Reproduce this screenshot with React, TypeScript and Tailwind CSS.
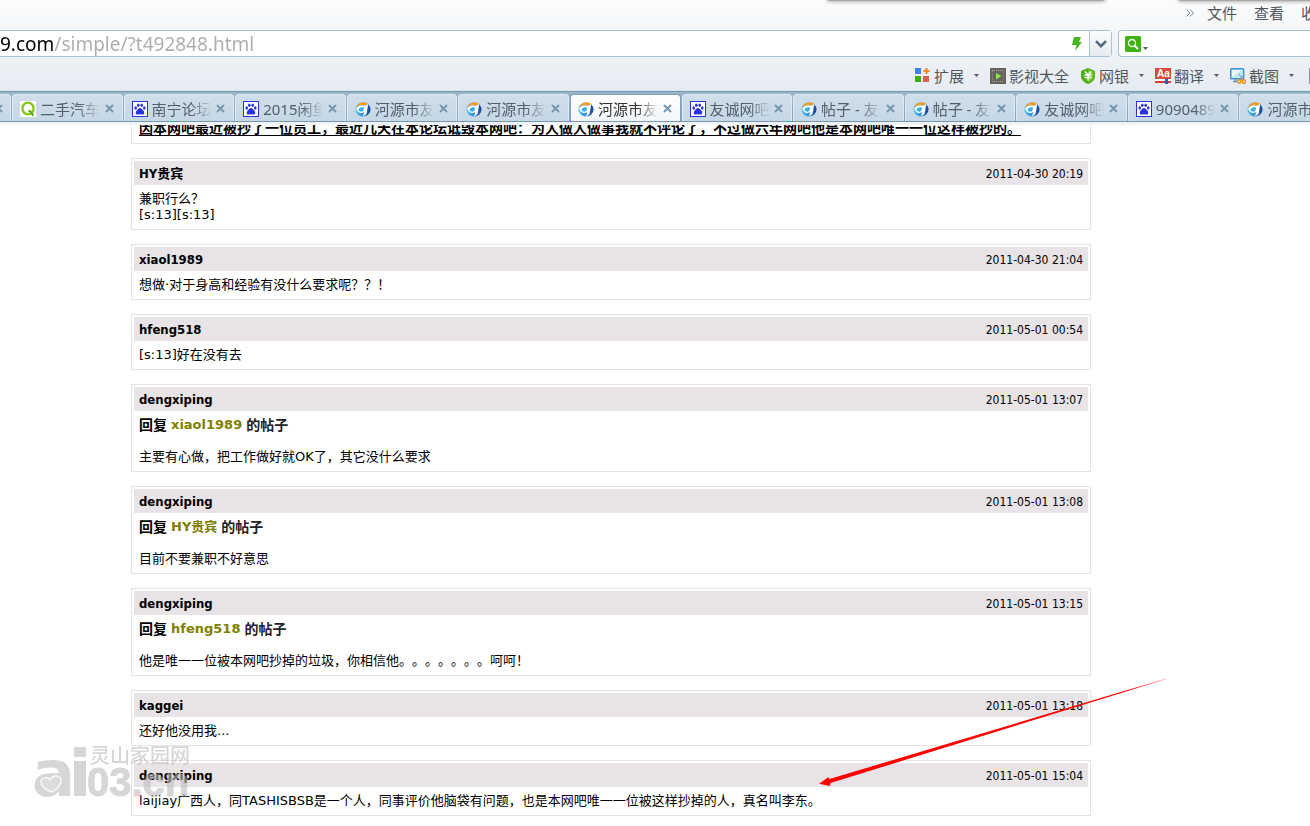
import { useId, type ReactNode } from 'react';

type SiteIcon = 'q' | 'paw' | 'swirl';

interface Tab {
  icon: SiteIcon;
  title: string;
  active?: boolean;
}

const TABS: Tab[] = [
  { icon: 'q', title: '二手汽车' },
  { icon: 'paw', title: '南宁论坛' },
  { icon: 'paw', title: '2015闲鱼' },
  { icon: 'swirl', title: '河源市友' },
  { icon: 'swirl', title: '河源市友' },
  { icon: 'swirl', title: '河源市友', active: true },
  { icon: 'paw', title: '友诚网吧' },
  { icon: 'swirl', title: '帖子 - 友' },
  { icon: 'swirl', title: '帖子 - 友' },
  { icon: 'swirl', title: '友诚网吧' },
  { icon: 'paw', title: '9090489' },
  { icon: 'swirl', title: '河源市友' },
];

interface Post {
  author: string;
  time: string;
  replyTo?: string;
  lines: string[];
}

const POSTS: Post[] = [
  { author: 'HY贵宾', time: '2011-04-30 20:19', lines: ['兼职行么？', '[s:13][s:13]'] },
  { author: 'xiaol1989', time: '2011-04-30 21:04', lines: ['想做·对于身高和经验有没什么要求呢？？！'] },
  { author: 'hfeng518', time: '2011-05-01 00:54', lines: ['[s:13]好在没有去'] },
  {
    author: 'dengxiping',
    time: '2011-05-01 13:07',
    replyTo: 'xiaol1989',
    lines: ['主要有心做，把工作做好就OK了，其它没什么要求'],
  },
  { author: 'dengxiping', time: '2011-05-01 13:08', replyTo: 'HY贵宾', lines: ['目前不要兼职不好意思'] },
  {
    author: 'dengxiping',
    time: '2011-05-01 13:15',
    replyTo: 'hfeng518',
    lines: ['他是唯一一位被本网吧抄掉的垃圾，你相信他。。。。。。。呵呵！'],
  },
  { author: 'kaggei', time: '2011-05-01 13:18', lines: ['还好他没用我...'] },
  {
    author: 'dengxiping',
    time: '2011-05-01 15:04',
    lines: ['laijiay广西人，同TASHISBSB是一个人，同事评价他脑袋有问题，也是本网吧唯一一位被这样抄掉的人，真名叫李东。'],
  },
];

function TabIcon({ icon }: { icon: SiteIcon }) {
  const id = useId();
  if (icon === 'q') {
    return (
      <svg viewBox="0 0 16 16" className="size-4 shrink-0">
        <rect width="16" height="16" fill="#fff" />
        <ellipse cx="8" cy="7.5" rx="5.6" ry="5.9" fill="none" stroke="#86c41c" strokeWidth="2.4" />
        <path d="M8.5 9.5q3.5 1.2 4.5 5.5" fill="none" stroke="#5da80c" strokeWidth="2" />
      </svg>
    );
  }
  if (icon === 'paw') {
    return (
      <svg viewBox="0 0 16 16" className="size-4 shrink-0">
        <rect x="0.5" y="0.5" width="15" height="15" fill="#fff" stroke="#2932e1" />
        <g fill="#2932e1">
          <ellipse cx="3.7" cy="7" rx="1.3" ry="1.7" />
          <ellipse cx="6.3" cy="4.2" rx="1.3" ry="1.8" />
          <ellipse cx="9.7" cy="4.2" rx="1.3" ry="1.8" />
          <ellipse cx="12.3" cy="7" rx="1.3" ry="1.7" />
          <path d="M8 7c1.600 0 2.200 1.600 3.400 2.700 1.300 1.200 1.200 3.800-.9 3.900-1 0-1.500-.4-2.500-.4s-1.500.4-2.500.4c-2.100-.1-2.200-2.700-.9-3.900C5.800 8.600 6.400 7 8 7z" />
        </g>
      </svg>
    );
  }
  return (
    <svg viewBox="0 0 16 16" className="size-4 shrink-0">
      <defs>
        <linearGradient id={id} x1="0" y1="0" x2="1" y2="0">
          <stop offset="0" stopColor="#4cc3f2" />
          <stop offset="0.5" stopColor="#2f8fd6" />
          <stop offset="1" stopColor="#173f96" />
        </linearGradient>
      </defs>
      <ellipse cx="8" cy="8.5" rx="7.5" ry="7" fill={`url(#${id})`} />
      <path d="M.5 7C2.500 1.500 8 0 13.500 2.800L10 4.800C7 3.300 3 4.300.5 7z" fill="#f99a1c" />
      <path d="M1 7.500C4 3.800 7 3.600 10 4.800L13.200 3 11.500 13 8 15.500l1.200-4.500C6.500 13 3 12 1.800 9z" fill="#fff" />
      <path d="M3.500 8.700C4.500 6.500 7 5.800 9 6.700L8.500 9.500C7 11.200 4.300 11.200 3.500 8.700z" fill="#38aee6" />
    </svg>
  );
}

function CloseIcon() {
  return (
    <svg viewBox="0 0 9 9" className="size-[9px] shrink-0">
      <path d="M1 1l7 7M8 1l-7 7" stroke="#7596ae" strokeWidth="1.9" />
    </svg>
  );
}

function BrowserTab({ icon, title, active }: Tab) {
  return (
    <div
      className={`flex h-[27px] min-w-0 items-center rounded-t-sm border border-b-0 pl-[7px] pr-2 pt-px ${
        active
          ? 'border-[#7fa2bb] bg-linear-to-b from-white to-[#f2f6fa]'
          : 'border-[#dfeaf2] bg-linear-to-b from-[#cfdeea] to-[#c6d7e5]'
      }`}
    >
      <TabIcon icon={icon} />
      <span
        className={`ml-1 w-[60px] overflow-hidden whitespace-nowrap text-[15px] leading-5 [mask-image:linear-gradient(to_right,black_65%,transparent)] ${
          active ? 'text-[#333333]' : 'text-[#4f5f6c]'
        }`}
      >
        {title}
      </span>
      <button type="button" aria-label="关闭" className="ml-auto">
        <CloseIcon />
      </button>
    </div>
  );
}

function Caret() {
  return (
    <svg viewBox="0 0 5 3" className="h-[3px] w-[5px] shrink-0">
      <path d="M0 0h5L2.500 3z" fill="#555b61" />
    </svg>
  );
}

function ToolButton({ label, menu, children }: { label: string; menu?: boolean; children: ReactNode }) {
  return (
    <button type="button" className="flex shrink-0 items-center">
      <svg viewBox="0 0 16 16" className="size-4 shrink-0">
        {children}
      </svg>
      <span className="ml-[3px] mr-2.5 whitespace-nowrap text-[15px] leading-5 last:mr-0">{label}</span>
      {menu && <Caret />}
    </button>
  );
}

function BrowserChrome() {
  return (
    <header className="bg-linear-to-b from-[#fbfcfd] to-[#dfe6ee] font-['Noto_Sans','Noto_Sans_CJK_SC',sans-serif] text-[#50565c]">
      <div className="relative h-[30px] overflow-hidden">
        {/* edges of the windows lying behind */}
        <div className="absolute -top-1 right-[205px] h-[5px] w-[278px] rounded bg-[#a9a9a9] shadow-[0_0_4px_#8a8a8a]" />
        <div className="absolute -right-1 -top-1 h-[5px] w-[136px] rounded bg-[#a9a9a9] shadow-[0_0_4px_#8a8a8a]" />
        <nav className="flex h-full items-center justify-end gap-[17px] pb-1 text-[15px] leading-5">
          <button type="button" aria-label="更多" className="-mr-1">
            <svg viewBox="0 0 8 8" className="size-2" fill="none" stroke="#7b8187">
              <path d="M0.500 0.500L4 4 .5 7.500M4 .5L7.500 4 4 7.500" />
            </svg>
          </button>
          <button type="button">文件</button>
          <button type="button">查看</button>
          <button type="button" className="w-[9px] overflow-hidden text-left">收</button>
        </nav>
      </div>

      <div className="flex gap-1.5">
        <div className="flex h-[27px] min-w-0 flex-1 items-center rounded-r-sm border border-l-0 border-[#a9c1d3] bg-white">
          <input
            aria-label="地址"
            type="text"
            defaultValue="9.com/simple/?t492848.html"
            className="min-w-0 flex-1 bg-linear-to-r from-black from-[54px] to-[#adadad] to-[54px] bg-clip-text text-[19px] leading-6 text-transparent outline-none"
          />
          <svg viewBox="0 0 10 14" className="mr-[7px] h-3.5 w-2.5">
            <path d="M2 0h7L7 5h3L3 14l1.500-6H0z" fill="#45b81e" />
          </svg>
          <button
            type="button"
            aria-label="展开"
            className="flex h-full w-[22px] items-center justify-center border-l border-[#a9c1d3] bg-linear-to-b from-[#fafbfc] to-[#e6ebf1]"
          >
            <svg viewBox="0 0 12 8" className="h-2 w-3" fill="none">
              <path d="M1 1.200l5 5 5-5" stroke="#56697c" strokeWidth="2.6" />
            </svg>
          </button>
        </div>
        <div className="flex h-[27px] w-[192px] items-center rounded-l-sm border border-r-0 border-[#a9c1d3] bg-white pl-1.5">
          <svg viewBox="0 0 16 16" className="size-4">
            <rect width="16" height="16" rx="1.5" fill="#3db312" />
            <circle cx="7" cy="7" r="3.5" fill="none" stroke="#fff" strokeWidth="1.3" />
            <path d="M9.500 9.500l3.500 3.500" stroke="#fff" strokeWidth="2" />
          </svg>
          <div className="ml-0.5 mt-2.5">
            <Caret />
          </div>
          <input aria-label="搜索" type="text" className="min-w-0 flex-1 pl-1 text-[15px] outline-none" />
        </div>
      </div>

      <div className="flex h-[34px] items-center justify-end gap-[11px] overflow-hidden border-b border-[#dbe7ee] pt-1">
        <ToolButton label="扩展" menu>
          <rect width="6" height="6" fill="#4380f5" />
          <path d="M11.500 0v6M8.500 3h6" stroke="#f5861f" strokeWidth="2" />
          <rect y="8" width="6" height="6" fill="#3fac0b" />
          <rect x="8" y="8" width="6" height="6" fill="#d9604f" />
        </ToolButton>
        <ToolButton label="影视大全">
          <rect width="16" height="16" fill="#66635d" />
          <path d="M2 2.500h12M2 13.500h12" stroke="#aaa69d" strokeDasharray="1 1" />
          <path d="M2.500 3v10M13.500 3v10" stroke="#8d8981" strokeDasharray="1 1" />
          <path d="M6 5l5.500 3L6 11.500z" fill="#8fe04a" />
        </ToolButton>
        <ToolButton label="网银" menu>
          <path d="M8 0l7 3v5c0 4-3 6.500-7 8-4-1.500-7-4-7-8V3z" fill="#4fae16" />
          <path d="M8 1.500l5.500 2.300V8c0 3-2.200 5-5.500 6.400z" fill="#78c832" />
          <path d="M5 3.500l3 3.500 3-3.500M4.500 7h7M4.500 9.500h7M8 7v5.500" stroke="#fff" strokeWidth="1.4" fill="none" />
        </ToolButton>
        <ToolButton label="翻译" menu>
          <rect width="16" height="11" fill="#db4b41" />
          <rect y="11" width="16" height="2" fill="#fff" />
          <rect y="13" width="16" height="2" fill="#d23a32" />
          <rect x="10" y="11" width="3" height="5" fill="#1766c2" />
          <text x="2" y="9" fontSize="10" fontWeight="700" fontFamily="Liberation Sans" fill="#fff">Aa</text>
        </ToolButton>
        <ToolButton label="截图" menu>
          <rect x="0.7" y="0.7" width="13" height="10" rx="1" fill="#bfe6fb" stroke="#3d93d3" strokeWidth="1.4" />
          <path d="M2 2h10L2 9z" fill="#e9f8ff" />
          <path d="M3 13.500h5M5.500 11v2" stroke="#4d97cc" strokeWidth="1.3" />
          <path d="M9 6l4 6M14 6l-4 6" stroke="#7791a5" />
          <circle cx="9.3" cy="13.5" r="1.7" fill="none" stroke="#f08a12" strokeWidth="1.4" />
          <circle cx="13.8" cy="13.5" r="1.7" fill="none" stroke="#f08a12" strokeWidth="1.4" />
        </ToolButton>
        <div className="ml-1 h-4 w-px bg-[#8c9298]" />
      </div>

      <div className="overflow-hidden border-y border-[#7898b0] bg-linear-to-b from-[#9bb7cb] to-[#83a4bc]">
        <div className="flex gap-px pt-0.5">
          <div className="flex w-[11px] shrink-0 items-center justify-end overflow-hidden rounded-tr-sm border-r border-t border-[#dfeaf2] bg-linear-to-b from-[#cfdeea] to-[#c6d7e5] pr-[7px]">
            <CloseIcon />
          </div>
          <div className="grid w-[1338px] shrink-0 grid-cols-12 gap-px">
            {TABS.map((tab, i) => (
              <BrowserTab key={i} {...tab} />
            ))}
          </div>
        </div>
      </div>
    </header>
  );
}

function PostCard({ author, time, replyTo, lines }: Post) {
  return (
    <article className="border border-[#e4e4e4] p-0.5">
      <header className="flex h-6 items-center justify-between bg-[#e7e3e7] px-[5px] pt-0.5">
        <b className="font-['DejaVu_Sans_Condensed','Noto_Sans_CJK_SC',sans-serif]">{author}</b>
        <time className="font-['DejaVu_Sans_Condensed',sans-serif] text-[12px]">{time}</time>
      </header>
      <div className="px-[5px] pb-1 pt-1.5">
        {replyTo && (
          <h3 className="mb-4 flex gap-1 font-bold">
            <span className="text-[14px]">回复</span>
            <a href="#" className="text-[#808000]">{replyTo}</a>
            <span className="text-[14px] text-[#222222]">的帖子</span>
          </h3>
        )}
        {lines.map((line, i) => (
          <p key={i}>{line}</p>
        ))}
      </div>
    </article>
  );
}

// Site logo stamped over the lower left corner
function Watermark() {
  return (
    <svg
      viewBox="0 0 160 54"
      className="pointer-events-none absolute bottom-[26px] left-8 h-[54px] w-40 opacity-60"
      fill="#bcbcbc"
    >
      <text x="0" y="50" fontSize="64" fontWeight="700" fontFamily="DejaVu Sans">a</text>
      <path
        d="M20 46c-6-2-11-5-11-10 0-5 7-6 9-2 3-6 12-5 11 2-1 5-5 7-9 10z"
        fill="#c6c6c6"
        stroke="#f4f4f4"
        strokeWidth="1.5"
      />
      <rect x="42" y="1" width="12" height="10" />
      <rect x="42" y="15" width="12" height="35" />
      <text x="55" y="50" fontSize="40" fontWeight="700" fontFamily="Liberation Sans" stroke="#bcbcbc">03.cn</text>
      <text x="58" y="17" fontSize="20" fontWeight="500" fontFamily="Noto Sans CJK SC">灵山家园网</text>
    </svg>
  );
}

function Arrow() {
  return (
    <svg viewBox="0 0 350 110" className="pointer-events-none absolute bottom-[38px] left-[818px] h-[110px] w-[350px]">
      <defs>
        <linearGradient id="arrow-fade" x1="0" y1="0" x2="1" y2="0">
          <stop offset="0.88" stopColor="#ff0000" />
          <stop offset="1" stopColor="#ff0000" stopOpacity="0.3" />
        </linearGradient>
      </defs>
      <path d="M1 105.700L10.300 99.300 11.500 101 348 0.500 348 1.200 12.500 105 12 108z" fill="url(#arrow-fade)" />
    </svg>
  );
}

export default function App() {
  return (
    <div className="overflow-hidden bg-white">
      <BrowserChrome />
      <main className="relative overflow-hidden border-t-[3px] border-[#f0f4f8] pb-2.5 pl-[131px] font-['DejaVu_Sans','Noto_Sans_CJK_SC',sans-serif] text-[13px] leading-4 text-black [text-spacing-trim:space-all]">
        <div className="flex max-w-[960px] flex-col gap-3.5">
          <article className="overflow-hidden border border-t-0 border-[#e4e4e4] px-[7px] pb-[7px]">
            <p className="-mt-[5px] whitespace-nowrap text-[14px] font-bold underline underline-offset-2">
              因本网吧最近被抄了一位员工，最近几天在本论坛诋毁本网吧：为人做人做事我就不评论了，不过做六年网吧他是本网吧唯一一位这样被抄的。
            </p>
          </article>
          {POSTS.map((post, i) => (
            <PostCard key={i} {...post} />
          ))}
        </div>
        <Watermark />
        <Arrow />
      </main>
    </div>
  );
}
